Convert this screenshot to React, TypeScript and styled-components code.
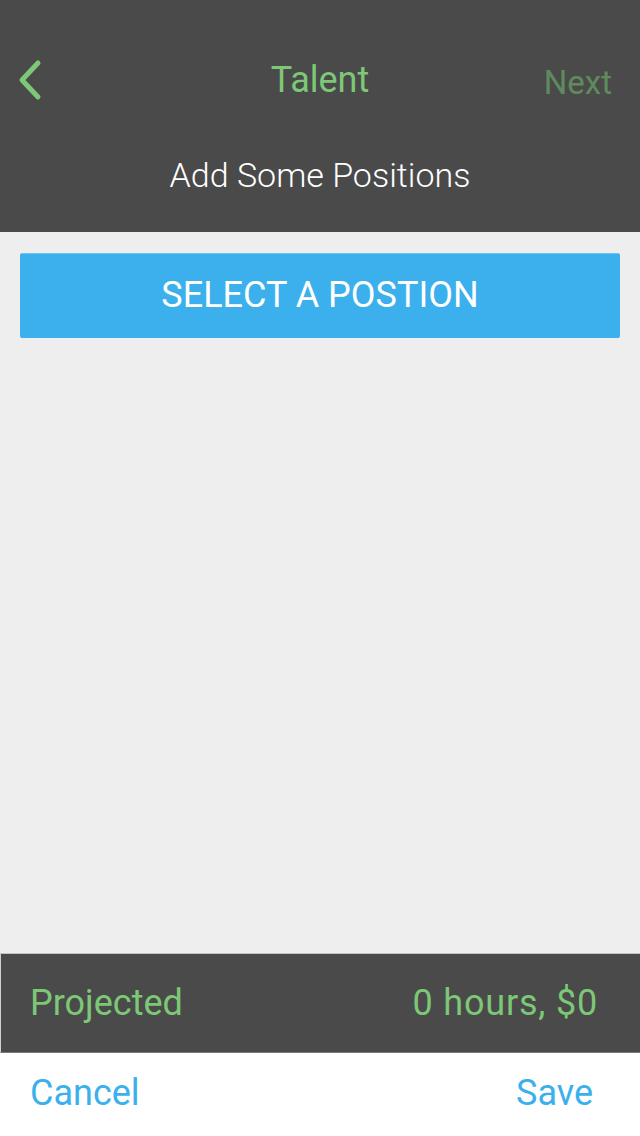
import React from "react";
import styled, { createGlobalStyle } from "styled-components";

const Global = createGlobalStyle`
  html, body { margin: 0; padding: 0; }
  body { font-family: Roboto, "Liberation Sans", sans-serif; background: #eeeeee; }
`;

const Screen = styled.div`
  width: 640px;
  height: 1136px;
  display: flex;
  flex-direction: column;
  background: #eeeeee;
  overflow: hidden;
`;

const Header = styled.header`
  height: 232px;
  background: #4a4a4a;
  display: flex;
  flex-direction: column;
  padding-top: 40px;
  box-sizing: border-box;
`;

const NavRow = styled.div`
  height: 80px;
  display: grid;
  grid-template-columns: 120px 1fr 120px;
  align-items: center;
`;

const BackButton = styled.div`
  display: flex;
  align-items: center;
  padding-left: 14px;
`;

const Title = styled.div`
  text-align: center;
  color: #7dc876;
  font-size: 36px;
  margin-top: 0;
`;

const NextLabel = styled.div`
  text-align: right;
  padding-right: 28px;
  color: #5f8a5d;
  font-size: 33px;
  margin-top: 5px;
`;

const Subtitle = styled.div`
  flex: 1;
  display: flex;
  align-items: center;
  justify-content: center;
  color: #ffffff;
  font-size: 34px;
  font-weight: 300;
  padding-bottom: 2px;
`;

const Body = styled.main`
  flex: 1;
  padding: 21px 20px 0;
`;

const SelectButton = styled.button`
  width: 600px;
  height: 85px;
  border: none;
  border-top: 1px solid #6cc4f2;
  border-radius: 2px;
  background: #3bb0ec;
  color: #ffffff;
  font-family: Roboto, "Liberation Sans", sans-serif;
  font-size: 36px;
  padding: 0 0 2px;
  display: flex;
  align-items: center;
  justify-content: center;
`;

const Summary = styled.div`
  height: 100px;
  box-sizing: border-box;
  background: #4a4a4a;
  border-top: 1px solid #c4c4c4;
  border-bottom: 1px solid #7a7a7a;
  border-left: 1px solid #d0d0d0;
  display: flex;
  align-items: center;
  justify-content: space-between;
  padding: 0 42px 0 29px;
  color: #7dc876;
  font-size: 36px;
`;

const Amount = styled.span`
  letter-spacing: 0.8px;
`;

const ActionBar = styled.div`
  height: 83px;
  background: #ffffff;
  display: flex;
  align-items: center;
  justify-content: space-between;
  padding: 0 47px 4px 30px;
  box-sizing: border-box;
  color: #3bb0ec;
  font-size: 36px;
`;

export default function App() {
  return (
    <>
      <Global />
      <Screen>
        <Header>
          <NavRow>
            <BackButton>
              <svg width="30" height="44" viewBox="0 0 30 44">
                <path d="M24 5 L8 22 L24 39" fill="none" stroke="#7dc876" strokeWidth="5" strokeLinecap="round" strokeLinejoin="round" />
              </svg>
            </BackButton>
            <Title>Talent</Title>
            <NextLabel>Next</NextLabel>
          </NavRow>
          <Subtitle>Add Some Positions</Subtitle>
        </Header>
        <Body>
          <SelectButton>SELECT A POSTION</SelectButton>
        </Body>
        <Summary>
          <span>Projected</span>
          <Amount>0 hours, $0</Amount>
        </Summary>
        <ActionBar>
          <span>Cancel</span>
          <span>Save</span>
        </ActionBar>
      </Screen>
    </>
  );
}
